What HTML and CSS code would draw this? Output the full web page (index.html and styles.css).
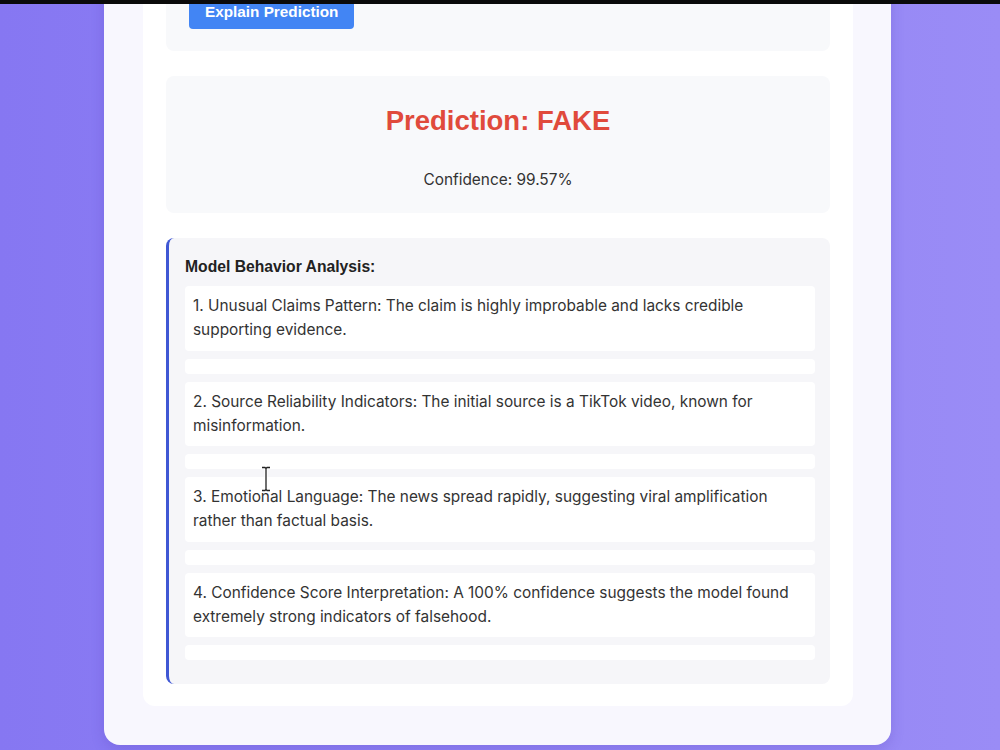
FILE: index.html
```html
<!DOCTYPE html>
<html lang="en">
<head>
    <meta charset="UTF-8">
    <meta name="viewport" content="width=device-width, initial-scale=1.0">
    <title>Fake News Detector</title>
    <link rel="stylesheet" href="styles.css">
</head>
<body>
    <div class="topbar"></div>
    <div class="page">
        <div class="card">
            <div class="panel">
                <div class="explain-box">
                    <button type="button" id="explainBtn">Explain Prediction</button>
                </div>

                <div class="result-box">
                    <h2 class="prediction fake">Prediction: FAKE</h2>
                    <p class="confidence">Confidence: 99.57%</p>
                </div>

                <div class="analysis-box">
                    <h4>Model Behavior Analysis:</h4>
                    <div class="analysis-list">
                        <p>1. Unusual Claims Pattern: The claim is highly improbable and lacks credible supporting evidence.</p>
                        <p></p>
                        <p>2. Source Reliability Indicators: The initial source is a TikTok video, known for misinformation.</p>
                        <p></p>
                        <p>3. Emotional Language: The news spread rapidly, suggesting viral amplification rather than factual basis.</p>
                        <p></p>
                        <p>4. Confidence Score Interpretation: A 100% confidence suggests the model found extremely strong indicators of falsehood.</p>
                        <p></p>
                    </div>
                </div>
            </div>
        </div>

        <!-- mouse text cursor -->
        <svg class="cursor" width="12" height="26" viewBox="0 0 12 26">
            <path d="M2 1.5h3l1 1 1-1h3M6 2.5v21M2 24.5h3l1-1 1 1h3" fill="none" stroke="#fff" stroke-width="3"/>
            <path d="M2 1.5h3l1 1 1-1h3M6 2.5v21M2 24.5h3l1-1 1 1h3" fill="none" stroke="#222" stroke-width="1.3"/>
        </svg>
    </div>
</body>
</html>
```

FILE: styles.css
```css
body {
    margin: 0;
    background: linear-gradient(to right, #8677f2, #9a8cf6);
    font-family: Inter, "Noto Sans", sans-serif;
}
.topbar {
    height: 4px;
    background: #0a0a0a;
}
.page {
    position: relative;
    height: 746px;
    overflow: hidden;
}
.card {
    width: 787px;
    box-sizing: border-box;
    margin: -94px 0 0 104px;
    padding: 39px 38px 39px 39px;
    background: #f8f7fe;
    border-radius: 0 0 16px 16px;
    box-shadow: 0 4px 14px rgba(60, 40, 160, 0.18);
}
.panel {
    display: flex;
    flex-direction: column;
    gap: 25px;
    padding: 23px 23px 22px;
    background: #ffffff;
    border-radius: 12px;
}
.explain-box {
    padding: 23px 23px 22px;
    background: #f8f9fb;
    border-radius: 8px;
}
button {
    display: block;
    padding: 8px 16px;
    font-family: "Liberation Sans", Arial, sans-serif;
    font-size: 15.3px;
    font-weight: bold;
    line-height: 18px;
    border: none;
    background: #4285f4;
    color: white;
    cursor: pointer;
    border-radius: 4px;
}
button:hover {
    background: #2f6fd8;
}
.result-box {
    padding: 28px 20px 21px;
    background: #f8f9fb;
    border-radius: 8px;
    text-align: center;
}
.prediction {
    margin: 0;
    font-family: "Liberation Sans", Arial, sans-serif;
    font-size: 27.5px;
    line-height: 34px;
    font-weight: bold;
}
.prediction.fake {
    color: #e04a3c;
}
.confidence {
    margin: 30px 0 0;
    font-size: 15.4px;
    line-height: 24px;
    color: #333;
}
.analysis-box {
    padding: 20px 15px 24px 16px;
    background: #f6f6f9;
    border-left: 3px solid #3f57d4;
    border-radius: 8px;
}
.analysis-box h4 {
    margin: 0 0 10px;
    font-family: "Liberation Sans", Arial, sans-serif;
    font-size: 15.7px;
    line-height: 18px;
    color: #222;
}
.analysis-list {
    display: flex;
    flex-direction: column;
    gap: 8px;
}
.analysis-list p {
    margin: 0;
    padding: 8px 8px 8.5px;
    background: #ffffff;
    border-radius: 4px;
    font-size: 15.4px;
    line-height: 24px;
    color: #333;
}
.analysis-list p:empty {
    padding: 7.5px 8px;
}
.cursor {
    position: absolute;
    left: 260px;
    top: 462px;
}
```
